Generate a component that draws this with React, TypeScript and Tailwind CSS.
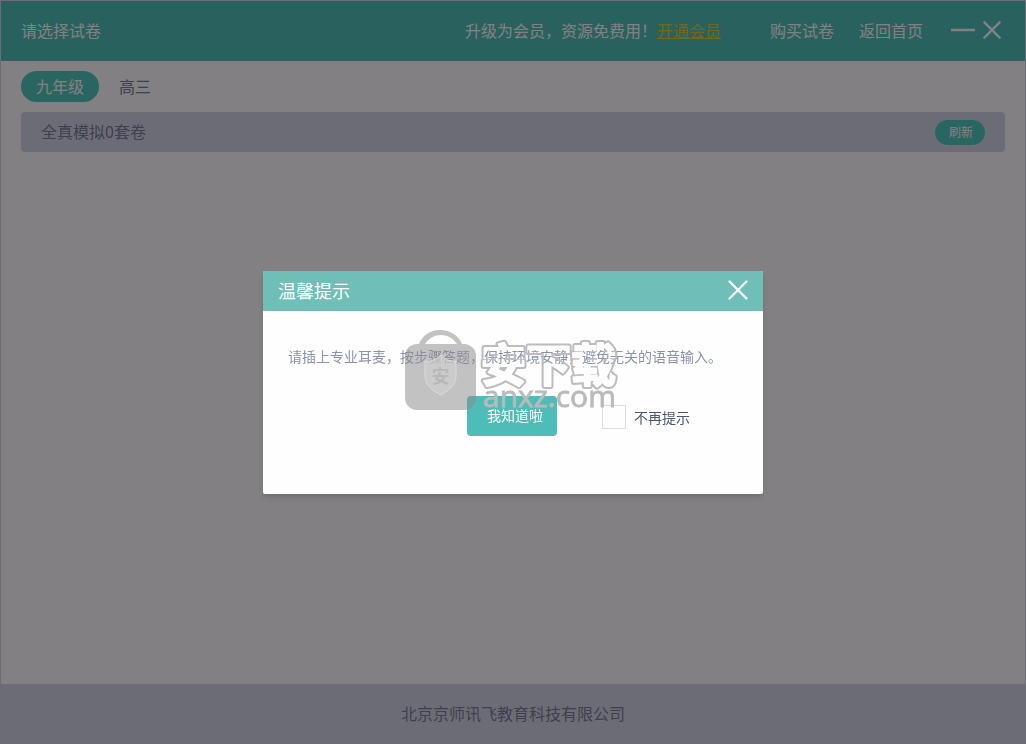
import { useState } from "react";

const grades = ["九年级", "高三"];

const CloseIcon = ({ className, strokeWidth }: { className: string; strokeWidth: number }) => (
  <svg
    viewBox="0 0 20 20"
    className={className}
    fill="none"
    stroke="currentColor"
    strokeWidth={strokeWidth}
    strokeLinecap="round"
  >
    <path d="M1.5 1.5 18.5 18.5M18.5 1.5 1.5 18.5" />
  </svg>
);

const TopBar = () => (
  <header className="flex h-[60px] items-center bg-[#4dc1b9] px-5 pb-0.5 text-white">
    <h1 className="flex-1">请选择试卷</h1>
    <p>
      升级为会员，资源免费用！
      <a href="#vip" className="text-[#dfcc35] underline">
        开通会员
      </a>
    </p>
    <nav className="ml-[49px] flex gap-[25px]">
      <a href="#buy">购买试卷</a>
      <a href="#home">返回首页</a>
    </nav>
    <div className="mr-1 ml-7 flex items-center gap-2">
      <button type="button" aria-label="最小化">
        <svg viewBox="0 0 24 18" className="h-[18px] w-6" stroke="currentColor" strokeWidth="2.5">
          <path d="M0 9H24" />
        </svg>
      </button>
      <button type="button" aria-label="关闭">
        <CloseIcon className="size-[18px]" strokeWidth={2.6} />
      </button>
    </div>
  </header>
);

const Watermark = () => (
  <svg
    viewBox="0 0 216 84"
    className="pointer-events-none absolute top-[57px] left-[141px] h-[84px] w-[216px]"
    aria-hidden="true"
  >
    {/* knocks the glyphs out so only their outer contour is left */}
    <mask id="contour" maskUnits="userSpaceOnUse" x="0" y="0" width="216" height="84">
      <rect width="216" height="84" fill="#fff" />
      <text
        x="77"
        y="54"
        fontSize="45"
        fontWeight="700"
        fill="#000"
        stroke="#000"
        strokeWidth="2"
        strokeLinejoin="round"
      >
        安下载
      </text>
    </mask>
    <g fill="#8a8a8a" fillOpacity="0.52">
      <path d="M15 16C18 8 26 2 36 2S55 8 58 16H53C49 10 43 7 37 7S25 10 21 16Z" />
      <rect x="1" y="16" width="71" height="66" rx="12" />
    </g>
    <path
      d="M21 33C27 34 33 31 37 27C41 31 46 34 52 33V48C52 57 44 63 37 67C29 63 21 57 21 48Z"
      fill="#d2d2d2"
      fillOpacity="0.6"
      stroke="#dadada"
    />
    <text x="36.5" y="55" textAnchor="middle" fontSize="18" fontWeight="700" fill="#b8b8b8">
      安
    </text>
    <text
      x="77"
      y="54"
      fontSize="45"
      fontWeight="700"
      fill="none"
      stroke="#bdbdbd"
      strokeWidth="6"
      strokeLinejoin="round"
      mask="url(#contour)"
    >
      安下载
    </text>
    <text
      x="79"
      y="79"
      fontSize="30"
      fontFamily="Open Sans, sans-serif"
      fill="#bababa"
      stroke="#bababa"
      strokeWidth="0.8"
    >
      anxz.com
    </text>
  </svg>
);

const TipDialog = ({ onClose }: { onClose: () => void }) => (
  <div className="fixed inset-0 flex items-center justify-center bg-[#050105]/50 pt-[21px]">
    <div
      role="dialog"
      aria-labelledby="tip-title"
      className="relative w-full max-w-[500px] overflow-hidden rounded-xs bg-[#fefefe] pb-[58px] shadow-md"
    >
      <div className="flex h-10 items-center justify-between bg-[#70beb8] px-[15px] pb-0.5 text-white">
        <h2 id="tip-title" className="text-lg">
          温馨提示
        </h2>
        <button type="button" aria-label="关闭" onClick={onClose}>
          <CloseIcon className="size-5" strokeWidth={2.2} />
        </button>
      </div>
      <p className="px-[25px] pt-[35px] text-sm text-[#8a93b0]">
        请插上专业耳麦，按步骤答题，保持环境安静，避免无关的语音输入。
      </p>
      <div className="mt-[30px] flex items-center pl-51">
        <button
          type="button"
          onClick={onClose}
          className="h-10 w-[90px] rounded bg-[#4ebdb8] pb-0.5 pl-1.5 text-sm text-white"
        >
          我知道啦
        </button>
        <label className="ml-[45px] flex items-center gap-2 pt-0.5 text-sm text-[#4c566f]">
          <input
            type="checkbox"
            className="size-6 appearance-none border border-[#dadde6] bg-transparent checked:bg-[#4ebdb8]"
          />
          不再提示
        </label>
      </div>
      <Watermark />
    </div>
  </div>
);

export default function App() {
  const [grade, setGrade] = useState(grades[0]);
  const [tipOpen, setTipOpen] = useState(true);

  return (
    <div className="flex min-h-screen flex-col border-x border-t border-[#d3d7e9] bg-white font-['Noto_Sans_CJK_SC',sans-serif] text-base text-[#777e98]">
      <TopBar />
      <main className="flex-1 px-5 pt-2.5">
        <div className="flex gap-[5px]">
          {grades.map((name) => (
            <button
              key={name}
              type="button"
              onClick={() => setGrade(name)}
              className={
                name === grade
                  ? "h-[31px] rounded-full bg-[#4ecbbd] px-[15px] pb-0.5 text-white"
                  : "h-[31px] rounded-full px-[15px] pb-0.5"
              }
            >
              {name}
            </button>
          ))}
        </div>
        <section className="mt-2.5 flex h-10 items-center justify-between rounded bg-[#d3d7e9] px-5">
          <h2 className="pb-0.5">全真模拟0套卷</h2>
          <button
            type="button"
            className="h-[25px] rounded-full bg-[#4ecbbd] pr-3 pl-3.5 text-xs text-white"
          >
            刷新
          </button>
        </section>
      </main>
      <footer className="flex h-[60px] items-center justify-center bg-[#d3d7e9] pb-0.5">
        北京京师讯飞教育科技有限公司
      </footer>
      {tipOpen && <TipDialog onClose={() => setTipOpen(false)} />}
    </div>
  );
}
